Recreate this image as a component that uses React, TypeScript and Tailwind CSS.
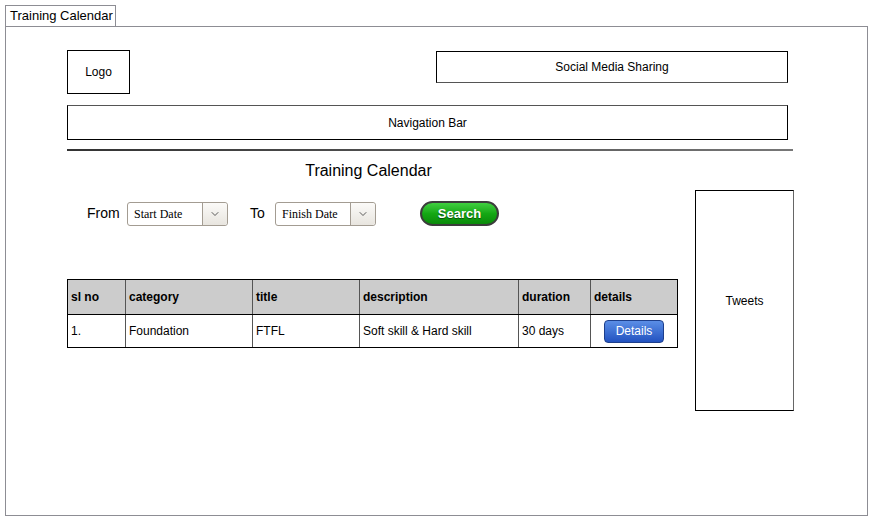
import { ChevronDown } from 'lucide-react'

const sketch = "font-['Liberation_Sans',Arial,sans-serif]"

function Select({ label }: { label: string }) {
  return (
    <div className="flex h-[24px] w-[101px] items-stretch rounded-[3px] border border-[#a39c92] bg-white">
      <div className="flex flex-1 items-center pl-[6px] font-['Liberation_Serif',serif] text-[12px] text-black">
        {label}
      </div>
      <div className="flex w-[25px] items-center justify-center rounded-r-[3px] border-l border-[#a39c92] bg-gradient-to-b from-[#fbfaf8] to-[#e8e5df]">
        <ChevronDown size={12} strokeWidth={1.6} className="text-[#333]" />
      </div>
    </div>
  )
}

const cols = [
  { head: 'sl no', w: 'w-[58px]', cell: '1.' },
  { head: 'category', w: 'w-[127px]', cell: 'Foundation' },
  { head: 'title', w: 'w-[107px]', cell: 'FTFL' },
  { head: 'description', w: 'w-[159px]', cell: 'Soft skill & Hard skill' },
  { head: 'duration', w: 'w-[72px]', cell: '30 days' },
]

export default function App() {
  return (
    <div className={`h-[523px] w-[875px] bg-white pl-[5px] pt-[5px] ${sketch}`}>
      <div className="flex h-[21px] w-[111px] items-center whitespace-nowrap border border-b-0 border-[#8d8d94] pl-[4px] text-[13px] text-black">
        Training Calendar
      </div>
      <div className="h-[490px] w-[863px] border border-[#8d8d94] pl-[61px] pt-[23px]">
        <div className="flex w-[721px] items-start justify-between">
          <div className="flex h-[44px] w-[63px] items-center justify-center border border-black text-[12px]">
            Logo
          </div>
          <div className="mt-[1px] flex h-[32px] w-[352px] items-center justify-center border border-black border-b-[#555] text-[12px]">
            Social Media Sharing
          </div>
        </div>
        <div className="mt-[11px] flex h-[35px] w-[721px] items-center justify-center border border-black border-t-[#555] text-[12px]">
          Navigation Bar
        </div>
        <div className="mt-[9px] h-[2px] w-[726px] bg-gradient-to-r from-[#333] to-[#777]" />

        <div className="flex items-start">
          <div className="w-[611px]">
            <div className="mt-[8px] pr-[8px] text-center text-[16px] text-black">
              Training Calendar
            </div>
            <div className="mt-[18px] flex items-center pl-[20px] text-[14px]">
              <span className="w-[40px]">From</span>
              <Select label="Start Date" />
              <span className="ml-[22px] w-[25px]">To</span>
              <Select label="Finish Date" />
              <button className="ml-[44px] flex h-[25px] w-[79px] items-center justify-center rounded-full border-2 border-[#3c3c3c] bg-gradient-to-b from-[#3fcf3f] via-[#14a814] to-[#0a8a0a] text-[13px] font-bold text-white [text-shadow:0_1px_1px_rgba(0,0,0,0.5)]">
                Search
              </button>
            </div>

            <div className="mt-[53px] w-[611px] border border-black text-[12px]">
              <div className="flex h-[34px] bg-[#cccccc] font-bold">
                {cols.map((c) => (
                  <div key={c.head} className={`${c.w} flex items-center border-r border-[#555] pl-[3px]`}>
                    {c.head}
                  </div>
                ))}
                <div className="flex flex-1 items-center pl-[3px]">details</div>
              </div>
              <div className="flex h-[33px] border-t border-black">
                {cols.map((c) => (
                  <div key={c.head} className={`${c.w} flex items-center border-r border-[#555] pl-[3px]`}>
                    {c.cell}
                  </div>
                ))}
                <div className="flex flex-1 items-center justify-center">
                  <button className="flex h-[23px] w-[60px] items-center justify-center rounded-[4px] border border-[#1d3f8c] bg-gradient-to-b from-[#5b8ee6] to-[#2352c0] text-[12px] text-white">
                    Details
                  </button>
                </div>
              </div>
            </div>
          </div>

          <div className="ml-[17px] mt-[39px] flex h-[221px] w-[99px] items-center justify-center border border-black border-r-[#666] text-[12px]">
            Tweets
          </div>
        </div>
      </div>
    </div>
  )
}
